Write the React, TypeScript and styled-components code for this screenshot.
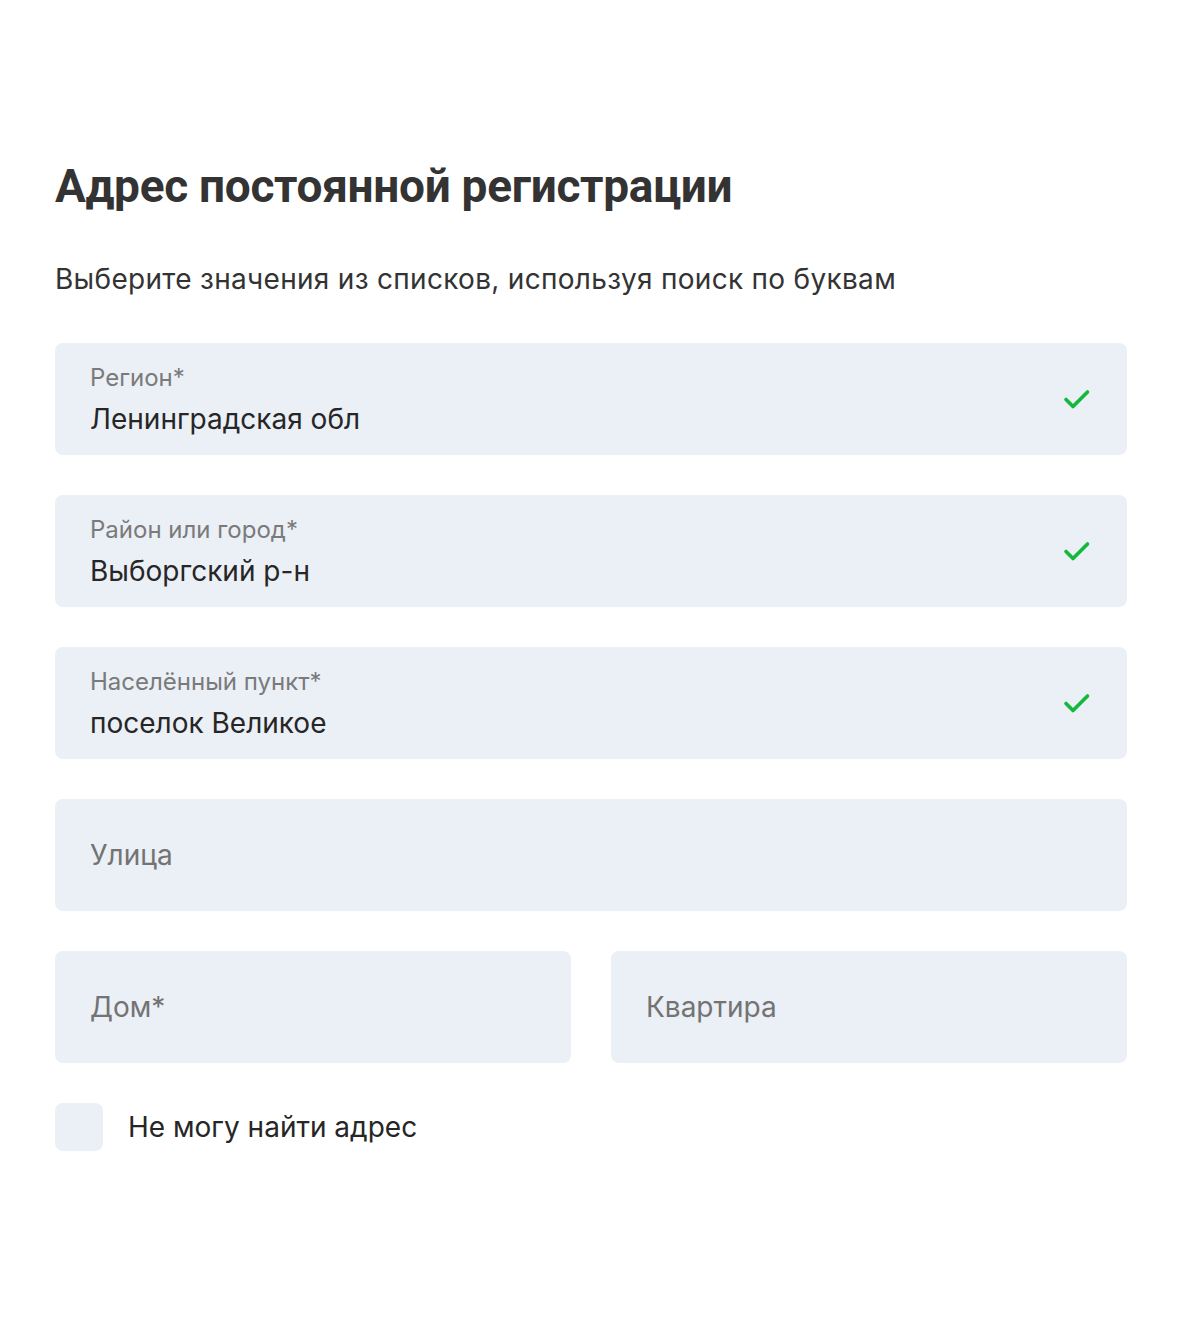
import styled, { createGlobalStyle } from 'styled-components';

const GlobalStyle = createGlobalStyle`
  body {
    margin: 0;
    background: #fff;
    font-family: Inter, "Noto Sans", sans-serif;
    color: #262626;
  }
`;

const Page = styled.div`
  padding: 156px 55px 0;
  width: 1072px;
`;

const Title = styled.h1`
  margin: 0;
  font-family: Roboto, sans-serif;
  font-weight: 700;
  font-size: 46px;
  line-height: 60px;
  letter-spacing: -0.3px;
  color: #333;
`;

const Hint = styled.p`
  margin: 43px 0 0;
  font-size: 28px;
  line-height: 40px;
  letter-spacing: 0.3px;
  color: #333;
`;

const Form = styled.div`
  margin-top: 44px;
  display: flex;
  flex-direction: column;
  gap: 40px;
`;

const Row = styled.div`
  display: grid;
  grid-template-columns: 1fr 1fr;
  gap: 40px;
`;

const Field = styled.div`
  height: 112px;
  box-sizing: border-box;
  background: #ebeff6;
  border-radius: 8px;
  padding: 0 35px;
  display: flex;
  align-items: center;
  justify-content: space-between;
`;

const FieldText = styled.div`
  align-self: flex-start;
  padding-top: 20px;
  display: flex;
  flex-direction: column;
  gap: 6px;
`;

const Label = styled.span`
  font-size: 24px;
  line-height: 30px;
  color: #7a7a7a;
`;

const Value = styled.span<{ $placeholder?: boolean }>`
  font-size: 28px;
  line-height: 40px;
  color: ${(p) => (p.$placeholder ? '#737373' : '#262626')};
`;

const CheckRow = styled.label`
  display: flex;
  align-items: center;
  gap: 25px;
`;

const Box = styled.span`
  width: 48px;
  height: 48px;
  border-radius: 8px;
  background: #ebeff6;
`;

const CheckText = styled.span`
  font-size: 28px;
  color: #262626;
`;

const Tick = () => (
  <svg width="28" height="22" viewBox="0 0 28 22" style={{ marginRight: 1 }}>
    <path d="M3 11.5l7 7L24.5 4" fill="none" stroke="#14b83a" strokeWidth="3.6" strokeLinecap="round" strokeLinejoin="round" />
  </svg>
);

const filled = [
  { label: 'Регион*', value: 'Ленинградская обл' },
  { label: 'Район или город*', value: 'Выборгский р-н' },
  { label: 'Населённый пункт*', value: 'поселок Великое' },
];

export default function App() {
  return (
    <>
      <GlobalStyle />
      <Page>
        <Title>Адрес постоянной регистрации</Title>
        <Hint>Выберите значения из списков, используя поиск по буквам</Hint>
        <Form>
          {filled.map((f) => (
            <Field key={f.label}>
              <FieldText>
                <Label>{f.label}</Label>
                <Value>{f.value}</Value>
              </FieldText>
              <Tick />
            </Field>
          ))}
          <Field>
            <Value $placeholder>Улица</Value>
          </Field>
          <Row>
            <Field>
              <Value $placeholder>Дом*</Value>
            </Field>
            <Field>
              <Value $placeholder>Квартира</Value>
            </Field>
          </Row>
          <CheckRow>
            <Box />
            <CheckText>Не могу найти адрес</CheckText>
          </CheckRow>
        </Form>
      </Page>
    </>
  );
}
